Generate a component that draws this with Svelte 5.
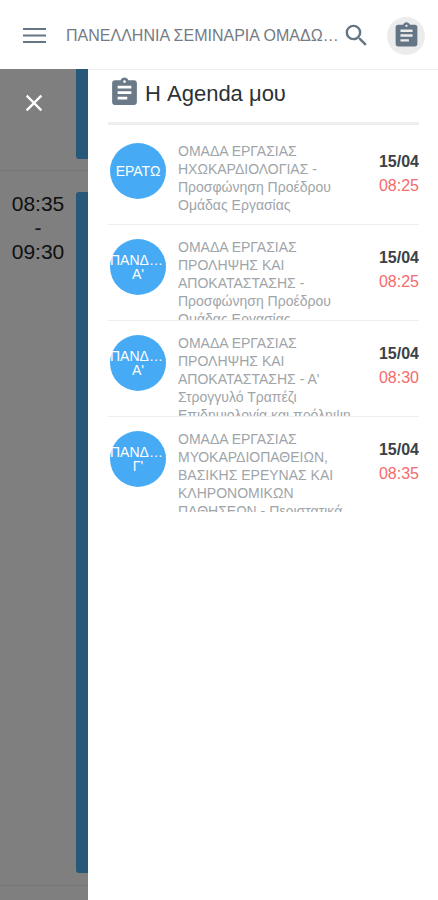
<script>
  /**
   * Mobile programme page with the "my agenda" drawer open on top of it
   */
  const congress = "ΠΑΝΕΛΛΗΝΙΑ ΣΕΜΙΝΑΡΙΑ ΟΜΑΔΩΝ ΕΡΓΑΣΙΑΣ";

  const agenda = [
    {
      id: 1,
      hall: "ΕΡΑΤΩ",
      title: "ΟΜΑΔΑ ΕΡΓΑΣΙΑΣ ΗΧΩΚΑΡΔΙΟΛΟΓΙΑΣ - Προσφώνηση Προέδρου Ομάδας Εργασίας",
      date: "15/04",
      time: "08:25",
    },
    {
      id: 2,
      hall: "ΠΑΝΔΩΡΑ",
      suffix: "Α'",
      title: "ΟΜΑΔΑ ΕΡΓΑΣΙΑΣ ΠΡΟΛΗΨΗΣ ΚΑΙ ΑΠΟΚΑΤΑΣΤΑΣΗΣ - Προσφώνηση Προέδρου Ομάδας Εργασίας",
      date: "15/04",
      time: "08:25",
    },
    {
      id: 3,
      hall: "ΠΑΝΔΩΡΑ",
      suffix: "Α'",
      title: "ΟΜΑΔΑ ΕΡΓΑΣΙΑΣ ΠΡΟΛΗΨΗΣ ΚΑΙ ΑΠΟΚΑΤΑΣΤΑΣΗΣ - Α' Στρογγυλό Τραπέζι Επιδημιολογία και πρόληψη",
      date: "15/04",
      time: "08:30",
    },
    {
      id: 4,
      hall: "ΠΑΝΔΩΡΑ",
      suffix: "Γ'",
      title: "ΟΜΑΔΑ ΕΡΓΑΣΙΑΣ ΜΥΟΚΑΡΔΙΟΠΑΘΕΙΩΝ, ΒΑΣΙΚΗΣ ΕΡΕΥΝΑΣ ΚΑΙ ΚΛΗΡΟΝΟΜΙΚΩΝ ΠΑΘΗΣΕΩΝ - Περιστατικά",
      date: "15/04",
      time: "08:35",
    },
  ];
</script>

<style>
  :global(body) {
    background: #fff;
    font-family: "Liberation Sans", Arial, sans-serif;
  }

  .page {
    min-height: 100vh;
    display: flex;
    flex-direction: column;
  }

  button {
    border: none;
    padding: 0;
    background: transparent;
    color: inherit;
    display: flex;
    align-items: center;
    justify-content: center;
    cursor: pointer;
  }

  svg {
    display: block;
    fill: currentColor;
  }

  .topbar {
    box-sizing: border-box;
    height: 69px;
    padding: 2px 13px 0 20px;
    display: flex;
    align-items: center;
    color: #647685;
  }
  .topbar__title {
    flex: 1;
    min-width: 0;
    margin: 0 0 0 17px;
    font-size: 16px;
    font-weight: normal;
    color: #737b84;
    white-space: nowrap;
    overflow: hidden;
    text-overflow: ellipsis;
  }
  .topbar__agenda {
    width: 38px;
    height: 38px;
    margin-left: 16px;
    border-radius: 50%;
    background: #ececed;
  }

  .content {
    flex: 1;
    display: flex;
  }

  .programme {
    position: relative;
    width: 88px;
    flex: none;
    display: flex;
    flex-direction: column;
    background: #fff;
  }
  .slot {
    display: flex;
    justify-content: space-between;
    border-bottom: 1px solid #eee;
  }
  .slot--past {
    height: 90px;
    padding-bottom: 11px;
  }
  .slot--current {
    flex: 1;
    padding: 21px 0 12px;
    margin-bottom: 14px;
  }
  .slot__time {
    width: 76px;
    font-size: 21px;
    line-height: 24px;
    text-align: center;
    color: #222;
  }
  .slot__time span {
    display: block;
  }
  .slot__bar {
    width: 12px;
    background: #4cb0f4;
    border-radius: 0 0 0 3px;
  }
  .slot--current .slot__bar {
    border-radius: 3px 0 0 3px;
  }

  .backdrop {
    position: absolute;
    inset: 0;
    background: rgba(0, 0, 0, 0.5);
  }
  .backdrop__close {
    position: absolute;
    top: 20px;
    left: 20px;
    color: #fff;
  }

  .drawer {
    flex: 1;
    min-width: 0;
    padding: 0 19px 0 20px;
    border-top: 1px solid #eee;
    background: #fff;
  }
  .drawer__title {
    box-sizing: border-box;
    height: 55px;
    margin: 0;
    padding-bottom: 4px;
    display: flex;
    align-items: center;
    gap: 4px;
    border-bottom: 3px solid #eee;
    font-size: 22px;
    font-weight: normal;
    color: #2b3135;
  }
  .drawer__title svg {
    flex: none;
    color: #6b7a88;
    margin-bottom: 4px;
  }

  .agenda {
    list-style: none;
    margin: 0;
    padding: 4px 0 0;
  }
  .agenda__item {
    box-sizing: border-box;
    height: 96px;
    display: flex;
    border-bottom: 1px solid #eee;
    overflow: hidden;
  }
  .agenda__item:last-child {
    border-bottom-color: transparent;
  }
  .hall {
    box-sizing: border-box;
    width: 56px;
    height: 56px;
    flex: none;
    margin: 14px 12px 0 2px;
    border-radius: 50%;
    background: #47aaf5;
    color: #fff;
    font-size: 14px;
    line-height: 14px;
    text-align: center;
    display: flex;
    flex-direction: column;
    justify-content: center;
  }
  .hall span {
    overflow: hidden;
    text-overflow: ellipsis;
  }
  .agenda__text {
    flex: 1;
    min-width: 0;
    margin: 13px 16px 0 0;
    font-size: 14px;
    line-height: 18px;
    color: #a0a5a9;
  }
  .agenda__when {
    padding-top: 21px;
    font-size: 16px;
    line-height: 24px;
    text-align: right;
    color: #f56a6c;
  }
  .agenda__when strong {
    display: block;
    color: #3c4146;
  }
</style>

{#snippet clipboard(size)}
  <svg width={size} height={size} viewBox="0 0 24 24" aria-hidden="true">
    <path d="M19 3h-4.2C14.4 1.8 13.3 1 12 1s-2.4.8-2.8 2H5c-1.100 0-2 .9-2 2v14c0 1.100.9 2 2 2h14c1.100 0 2-.9 2-2V5c0-1.100-.9-2-2-2zm-7 0c.55 0 1 .45 1 1s-.45 1-1 1-1-.45-1-1 .45-1 1-1zm2 14H7v-2h7v2zm3-4H7v-2h10v2zm0-4H7V7h10v2z" />
  </svg>
{/snippet}

<div class="page">
  <header class="topbar">
    <button aria-label="Μενού">
      <svg width="29" height="29" viewBox="0 0 29 29">
        <path d="M3 7h23v2h-23zM3 13.500h23v2h-23zM3 20h23v2h-23z" />
      </svg>
    </button>
    <h1 class="topbar__title">{congress}</h1>
    <button aria-label="Αναζήτηση">
      <svg width="29" height="29" viewBox="0 0 24 24">
        <path d="M15.500 14h-.79l-.28-.27A6.471 6.471 0 0 0 16 9.500 6.500 6.500 0 1 0 9.500 16c1.610 0 3.090-.59 4.230-1.570l.27.28v.79l5 4.990L20.490 19l-4.990-5zm-6 0C7.010 14 5 11.990 5 9.500S7.010 5 9.500 5 14 7.010 14 9.500 11.990 14 9.500 14z" />
      </svg>
    </button>
    <button class="topbar__agenda" aria-label="Agenda">{@render clipboard(29)}</button>
  </header>

  <div class="content">
    <section class="programme">
      <div class="slot slot--past">
        <div class="slot__time"></div>
        <div class="slot__bar"></div>
      </div>
      <div class="slot slot--current">
        <div class="slot__time">
          <span>08:35</span>
          <span>-</span>
          <span>09:30</span>
        </div>
        <div class="slot__bar"></div>
      </div>
      <div class="backdrop">
        <button class="backdrop__close" aria-label="Κλείσιμο">
          <svg width="28" height="28" viewBox="0 0 24 24">
            <path d="M19 6.410 17.590 5 12 10.590 6.410 5 5 6.410 10.590 12 5 17.590 6.410 19 12 13.410 17.590 19 19 17.590 13.410 12z" />
          </svg>
        </button>
      </div>
    </section>

    <aside class="drawer">
      <h2 class="drawer__title">{@render clipboard(33)} Η Agenda μου</h2>
      <ul class="agenda">
        {#each agenda as item (item.id)}
          <li class="agenda__item">
            <div class="hall">
              <span>{item.hall}</span>
              {#if item.suffix}
                <span>{item.suffix}</span>
              {/if}
            </div>
            <div class="agenda__text">{item.title}</div>
            <div class="agenda__when">
              <strong>{item.date}</strong>
              {item.time}
            </div>
          </li>
        {/each}
      </ul>
    </aside>
  </div>
</div>
